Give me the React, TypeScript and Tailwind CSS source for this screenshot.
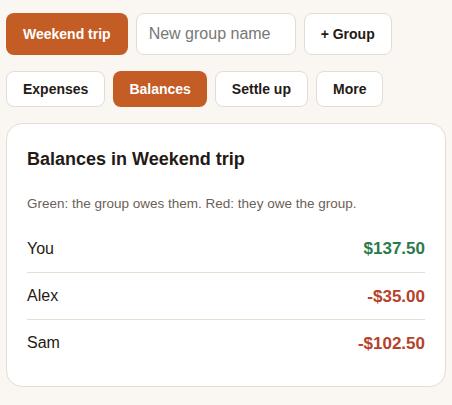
import { useState } from "react";

interface Balance {
  name: string;
  amount: number;
}

const balances: Balance[] = [
  { name: "You", amount: 137.5 },
  { name: "Alex", amount: -35 },
  { name: "Sam", amount: -102.5 },
];

const tabs = ["Expenses", "Balances", "Settle up", "More"];

const formatMoney = (n: number) =>
  (n < 0 ? "-$" : "$") + Math.abs(n).toFixed(2);

const App = () => {
  const [tab, setTab] = useState("Balances");
  const [groupName, setGroupName] = useState("");

  return (
    <div className="min-h-screen bg-[#faf6f1] px-[6px] pt-[13px] font-['Liberation_Sans',Arial,sans-serif] text-[#241a15]">
      <div className="flex gap-2">
        <button className="h-[42px] rounded-lg bg-[#c45c26] px-[17px] text-[14px] font-bold text-white">
          Weekend trip
        </button>
        <input
          value={groupName}
          onChange={(e) => setGroupName(e.target.value)}
          placeholder="New group name"
          className="h-[42px] w-[160px] rounded-lg border border-[#e6dcd3] bg-white px-3 text-[16px] outline-none placeholder:text-[#777]"
        />
        <button className="h-[42px] rounded-lg border border-[#e6dcd3] bg-white px-4 text-[14px] font-bold">
          + Group
        </button>
      </div>

      <nav className="mt-4 flex gap-2">
        {tabs.map((t) => (
          <button
            key={t}
            onClick={() => setTab(t)}
            className={`h-9 rounded-lg px-4 text-[14px] font-bold ${
              tab === t
                ? "bg-[#c45c26] text-white"
                : "border border-[#e6dcd3] bg-white"
            }`}
          >
            {t}
          </button>
        ))}
      </nav>

      <section className="mt-4 rounded-2xl border border-[#e6dcd3] bg-white px-5 pt-[24px] pb-[20px]">
        <h2 className="text-[18px] font-bold leading-[22px]">
          Balances in Weekend trip
        </h2>
        <p className="mt-[24px] text-[13.5px] text-[#6b5f58]">
          Green: the group owes them. Red: they owe the group.
        </p>
        <ul className="mt-[11px]">
          {balances.map((b, i) => (
            <li
              key={b.name}
              className={`flex h-[47px] items-center justify-between text-[16px] ${
                i > 0 ? "border-t border-[#e8ddd3]" : ""
              }`}
            >
              <span>{b.name}</span>
              <span
                className={`text-[17px] font-bold ${
                  b.amount < 0 ? "text-[#b5412b]" : "text-[#2b7a4b]"
                }`}
              >
                {formatMoney(b.amount)}
              </span>
            </li>
          ))}
        </ul>
      </section>
    </div>
  );
};

export default App;
